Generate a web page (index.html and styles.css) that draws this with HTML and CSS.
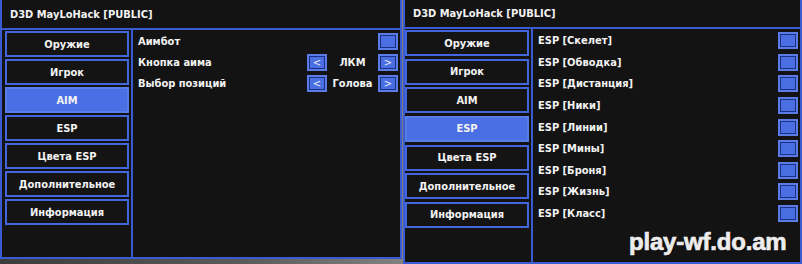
FILE: index.html
```html
<!DOCTYPE html>
<html>
<head>
<meta charset="utf-8">
<link rel="stylesheet" href="styles.css">
</head>
<body>
<div class="stage">
  <div class="win win-left">
    <div class="title">D3D MayLoHack [PUBLIC]</div>
    <div class="body">
      <div class="nav">
        <div class="btn">Оружие</div>
        <div class="btn">Игрок</div>
        <div class="btn active">AIM</div>
        <div class="btn">ESP</div>
        <div class="btn">Цвета ESP</div>
        <div class="btn">Дополнительное</div>
        <div class="btn">Информация</div>
      </div>
      <div class="content">
        <div class="row"><span class="label">Аимбот</span><span class="chk"></span></div>
        <div class="row"><span class="label">Кнопка аима</span>
          <div class="sel"><span class="chk arr">&lt;</span><span class="val">ЛКМ</span><span class="chk arr">&gt;</span></div></div>
        <div class="row"><span class="label">Выбор позиций</span>
          <div class="sel"><span class="chk arr">&lt;</span><span class="val">Голова</span><span class="chk arr">&gt;</span></div></div>
      </div>
    </div>
  </div>
  <div class="win win-right">
    <div class="title">D3D MayLoHack [PUBLIC]</div>
    <div class="body">
      <div class="nav">
        <div class="btn">Оружие</div>
        <div class="btn">Игрок</div>
        <div class="btn">AIM</div>
        <div class="btn active">ESP</div>
        <div class="btn">Цвета ESP</div>
        <div class="btn">Дополнительное</div>
        <div class="btn">Информация</div>
      </div>
      <div class="content">
        <div class="row"><span class="label">ESP [Скелет]</span><span class="chk"></span></div>
        <div class="row"><span class="label">ESP [Обводка]</span><span class="chk"></span></div>
        <div class="row"><span class="label">ESP [Дистанция]</span><span class="chk"></span></div>
        <div class="row"><span class="label">ESP [Ники]</span><span class="chk"></span></div>
        <div class="row"><span class="label">ESP [Линии]</span><span class="chk"></span></div>
        <div class="row"><span class="label">ESP [Мины]</span><span class="chk"></span></div>
        <div class="row"><span class="label">ESP [Броня]</span><span class="chk"></span></div>
        <div class="row"><span class="label">ESP [Жизнь]</span><span class="chk"></span></div>
        <div class="row"><span class="label">ESP [Класс]</span><span class="chk"></span></div>
      </div>
    </div>
  </div>
  <div class="watermark">play-wf.do.am</div>
</div>
</body>
</html>
```

FILE: styles.css
```css
html, body {
  margin: 0;
  padding: 0;
}
body {
  width: 802px;
  height: 264px;
  overflow: hidden;
  background: linear-gradient(to right, #3c3c3c 0%, #5a5a5a 30%, #8a8a8a 55%, #6a6a6a 80%, #4a4a4a 100%);
  font-family: "DejaVu Sans Condensed", "DejaVu Sans", "Liberation Sans", sans-serif;
  font-stretch: condensed;
  font-weight: bold;
  font-size: 11px;
  color: #f2f2f2;
}
.stage {
  position: relative;
  display: flex;
  align-items: flex-start;
  gap: 1px;
}
.win {
  box-sizing: border-box;
  background: #131313;
  border: 2px solid #3b5bd0;
  border-top: none;
  display: flex;
  flex-direction: column;
}
.win-left {
  width: 402px;
  height: 259px;
  --title-h: 28px;
  --gap: 2px;
  --row-h: 21px;
  --nav-w: 131px;
  --nav-pl: 3px;
}
.win-right {
  width: 399px;
  height: 264px;
  --title-h: 27px;
  --gap: 2.67px;
  --row-h: 21.6px;
  --nav-w: 128px;
  --nav-pl: 0px;
}
.title {
  height: var(--title-h);
  border-bottom: 2px solid #3b5bd0;
  display: flex;
  align-items: center;
  padding-left: 8px;
  flex: none;
}
.body {
  flex: 1;
  display: flex;
  min-height: 0;
}
.nav {
  box-sizing: border-box;
  width: var(--nav-w);
  flex: none;
  border-right: 2px solid #3b5bd0;
  display: flex;
  flex-direction: column;
  gap: var(--gap);
  padding: 1px 2px 0 var(--nav-pl);
}
.btn {
  box-sizing: border-box;
  height: 26px;
  border: 2px solid #4466dd;
  display: flex;
  align-items: center;
  justify-content: center;
  background: #141414;
}
.btn.active {
  background: #4a6ee3;
  border-color: #5a7ce8;
}
.content {
  flex: 1;
  padding: 1px 2px 0 5px;
  display: flex;
  flex-direction: column;
}
.row {
  height: var(--row-h);
  display: flex;
  align-items: center;
  justify-content: space-between;
}
.chk {
  box-sizing: border-box;
  width: 20px;
  height: 17px;
  border: 2px solid #5b7ce6;
  box-shadow: inset 0 0 0 1px #1c2f86;
  background: #4a6fe2;
  display: flex;
  align-items: center;
  justify-content: center;
  color: #e8ecff;
  font-weight: normal;
  font-size: 11px;
}
.sel {
  display: flex;
  align-items: center;
}
.val {
  width: 51px;
  text-align: center;
}
.watermark {
  position: absolute;
  left: 629px;
  top: 228px;
  font-family: "Liberation Sans", Arial, sans-serif;
  font-weight: bold;
  font-size: 24px;
  letter-spacing: -0.2px;
  color: #ececec;
  -webkit-text-stroke: 0.7px #ececec;
  text-shadow: 1px 1px 1px #000;
}
```
